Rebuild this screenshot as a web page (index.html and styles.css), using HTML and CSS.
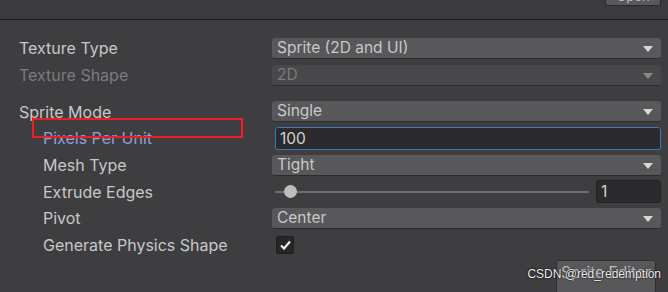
FILE: index.html
```html
<!DOCTYPE html>
<html lang="en">

<head>
  <meta charset="UTF-8">
  <title>Import Settings</title>
  <link rel="stylesheet" href="styles.css">
</head>

<body>

  <div class="header">
    <button class="open-btn">Open</button>
  </div>

  <div class="inspector">
    <div class="row">
      <div class="label">Texture Type</div>
      <div class="value"><div class="dropdown">Sprite (2D and UI)<span class="arrow"></span></div></div>
    </div>
    <div class="row disabled">
      <div class="label">Texture Shape</div>
      <div class="value"><div class="dropdown">2D<span class="arrow"></span></div></div>
    </div>

    <div class="spacer"></div>

    <div class="row">
      <div class="label">Sprite Mode</div>
      <div class="value"><div class="dropdown">Single<span class="arrow"></span></div></div>
    </div>
    <div class="row sub">
      <div class="label focus">Pixels Per Unit<span class="mark"></span></div>
      <div class="value"><div class="field active">100</div></div>
    </div>
    <div class="row sub">
      <div class="label">Mesh Type</div>
      <div class="value"><div class="dropdown">Tight<span class="arrow"></span></div></div>
    </div>
    <div class="row sub">
      <div class="label">Extrude Edges</div>
      <div class="value slider-wrap">
        <div class="slider"><span class="thumb"></span></div>
        <div class="field small">1</div>
      </div>
    </div>
    <div class="row sub">
      <div class="label">Pivot</div>
      <div class="value"><div class="dropdown">Center<span class="arrow"></span></div></div>
    </div>
    <div class="row sub">
      <div class="label">Generate Physics Shape</div>
      <div class="value">
        <span class="checkbox">
          <svg width="11" height="10" viewBox="0 0 11 10"><path d="M1 5.5 L4 8.5 L10 1.5" fill="none" stroke="#eee" stroke-width="2.2"/></svg>
        </span>
      </div>
    </div>

    <div class="footer">
      <button class="editor-btn">Sprite Editor</button>
      <span class="watermark">CSDN @red_redemption</span>
    </div>
  </div>

</body>

</html>
```

FILE: styles.css
```css
body {
  margin: 0;
  background: #3e3d40;
  font-family: Inter, "Noto Sans", sans-serif;
  color: #c8c8c8;
  overflow: hidden;
}

.header {
  height: 19px;
  background: #3b3a3d;
  border-bottom: 1px solid #1c1c1e;
  display: flex;
  justify-content: flex-end;
  padding-right: 7px;
}

.open-btn {
  width: 56px;
  height: 20px;
  margin-top: -14px;
  background: #59585b;
  border: 1px solid #2a2a2c;
  border-radius: 3px;
  color: #bbb;
  font-family: inherit;
  font-size: 13px;
}

.inspector {
  padding: 15px 7px 0 19px;
}

.row {
  display: flex;
  align-items: center;
  height: 26.7px;
  font-size: 16px;
}

.spacer {
  height: 10px;
}

.label {
  width: 253px;
  flex-shrink: 0;
  position: relative;
}

.sub .label {
  padding-left: 24px;
  width: 229px;
}

.disabled {
  color: #7c7b7f;
}

.focus {
  color: #8da3d9;
}

.mark {
  position: absolute;
  left: 13px;
  top: -10px;
  width: 207px;
  height: 16px;
  border: 2px solid #e81e28;
}

.value {
  flex: 1;
  display: flex;
  align-items: center;
  font-size: 15.5px;
}

.dropdown {
  flex: 1;
  height: 20px;
  line-height: 20px;
  padding-left: 5px;
  background: #58575a;
  border-bottom: 1px solid #2c2b2d;
  border-radius: 3px;
  position: relative;
}

.disabled .dropdown {
  background: #48474a;
}

.arrow {
  position: absolute;
  right: 8px;
  top: 8px;
  border-left: 5px solid transparent;
  border-right: 5px solid transparent;
  border-top: 6px solid #d8d8d8;
}

.disabled .arrow {
  border-top-color: #8a8a8a;
}

.field {
  flex: 1;
  height: 21px;
  line-height: 21px;
  padding-left: 4px;
  background: #2b2a2c;
  border: 1px solid #222;
  border-radius: 3px;
  color: #d4d4d4;
}

.field.active {
  margin-left: 3px;
  border: 1px solid #3f78b4;
}

.slider-wrap {
  gap: 7px;
}

.slider {
  flex: 1;
  height: 2px;
  margin-left: 3px;
  background: #6e6d70;
  position: relative;
}

.thumb {
  position: absolute;
  left: 9px;
  top: -6px;
  width: 13px;
  height: 13px;
  border-radius: 50%;
  background: #bdbdbd;
}

.field.small {
  flex: 0 0 59px;
}

.checkbox {
  margin-left: 4px;
  width: 16px;
  height: 16px;
  display: flex;
  align-items: center;
  justify-content: center;
  background: #262527;
  border: 1px solid #1c1c1c;
  border-radius: 2px;
}

.footer {
  display: flex;
  justify-content: flex-end;
  position: relative;
  margin-top: 1px;
  padding-right: 5px;
}

.editor-btn {
  width: 100px;
  height: 34px;
  background: #58575a;
  border: 1px solid #2e2d30;
  border-radius: 3px;
  color: #b8b8b8;
  font-family: inherit;
  font-size: 15.5px;
  white-space: nowrap;
  padding: 0 0 8px;
}

.watermark {
  position: absolute;
  right: 0;
  top: 7px;
  font-family: "Liberation Sans", Arial, sans-serif;
  font-size: 12px;
  color: #f2f2f2;
  text-shadow: 0 0 2px #000, 0 0 1px #000;
}
```
